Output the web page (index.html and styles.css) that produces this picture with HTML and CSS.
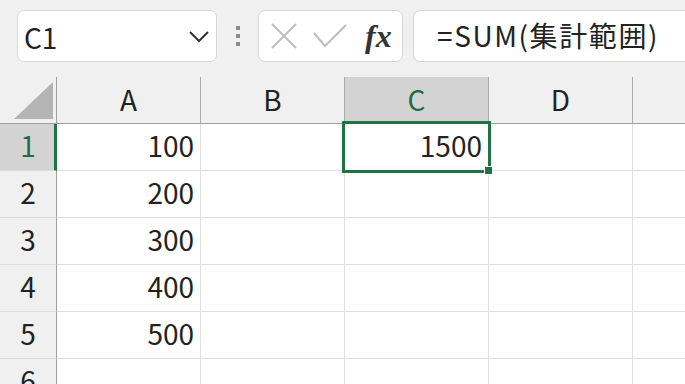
FILE: index.html
```html
<!DOCTYPE html>
<html lang="ja">
<head>
    <meta charset="UTF-8">
    <title>Book1</title>
    <link rel="stylesheet" href="styles.css">
</head>
<body>
    <div class="toolbar">
        <div class="namebox">
            <span class="name">C1</span>
            <svg class="chevron" width="20" height="12" viewBox="0 0 20 12">
                <polyline points="1,1 10,10 19,1" fill="none" stroke="#333" stroke-width="2"/>
            </svg>
        </div>
        <div class="dots"><i></i><i></i><i></i></div>
        <div class="fbox">
            <svg width="26" height="26" viewBox="0 0 26 26">
                <path d="M1 1 L25 25 M25 1 L1 25" stroke="#bdbdbd" stroke-width="2" fill="none"/>
            </svg>
            <svg width="34" height="24" viewBox="0 0 34 24">
                <polyline points="1,9 12,22 33,1" stroke="#bdbdbd" stroke-width="2" fill="none"/>
            </svg>
            <span class="fx">fx</span>
        </div>
        <div class="formula">=SUM(集計範囲)</div>
    </div>

    <div class="sheet">
        <div class="corner"><span></span></div>
        <div class="colhead">A</div>
        <div class="colhead">B</div>
        <div class="colhead active">C</div>
        <div class="colhead">D</div>
        <div class="colhead"></div>

        <div class="rowhead active">1</div>
        <div class="cell">100</div>
        <div class="cell"></div>
        <div class="cell">1500</div>
        <div class="cell"></div>
        <div class="cell"></div>

        <div class="rowhead">2</div>
        <div class="cell">200</div>
        <div class="cell"></div>
        <div class="cell"></div>
        <div class="cell"></div>
        <div class="cell"></div>

        <div class="rowhead">3</div>
        <div class="cell">300</div>
        <div class="cell"></div>
        <div class="cell"></div>
        <div class="cell"></div>
        <div class="cell"></div>

        <div class="rowhead">4</div>
        <div class="cell">400</div>
        <div class="cell"></div>
        <div class="cell"></div>
        <div class="cell"></div>
        <div class="cell"></div>

        <div class="rowhead">5</div>
        <div class="cell">500</div>
        <div class="cell"></div>
        <div class="cell"></div>
        <div class="cell"></div>
        <div class="cell"></div>

        <div class="rowhead">6</div>
        <div class="cell"></div>
        <div class="cell"></div>
        <div class="cell"></div>
        <div class="cell"></div>
        <div class="cell"></div>

        <div class="selection"><span class="handle"></span></div>
    </div>
</body>
</html>
```

FILE: styles.css
```css
html,body{
    margin: 0;
    padding: 0;
    height: 100%;
    overflow: hidden;
    background-color: #f0f0f0;
    font-family: "Noto Sans CJK JP", "Noto Sans", sans-serif;
    color: #222;
}
.toolbar{
    display: flex;
    align-items: center;
    padding: 10px 0 0 17px;
    height: 52px;
}
.toolbar>div{
    flex: none;
}
.namebox{
    box-sizing: border-box;
    width: 200px;
    height: 52px;
    background-color: #fff;
    border: 1px solid #d6d6d6;
    border-radius: 7px;
    display: flex;
    align-items: center;
    justify-content: space-between;
    padding: 0 7px 0 6px;
}
.name{
    font-size: 28px;
    line-height: 1;
    margin-top: 2px;
}
.chevron{
    margin-top: 2px;
}
.dots{
    width: 41px;
    display: flex;
    flex-direction: column;
    align-items: center;
    gap: 4px;
}
.dots i{
    display: block;
    width: 4px;
    height: 4px;
    background-color: #8c8c8c;
}
.fbox{
    box-sizing: border-box;
    width: 145px;
    height: 52px;
    background-color: #fff;
    border: 1px solid #d6d6d6;
    border-radius: 7px;
    display: flex;
    align-items: center;
    padding: 0 0 0 12px;
    gap: 18px;
}
.fbox svg:nth-child(2){
    margin-left: -2px;
}
.fx{
    font-family: "Liberation Serif", serif;
    font-style: italic;
    font-weight: bold;
    font-size: 32px;
    color: #333;
    line-height: 1;
}
.formula{
    box-sizing: border-box;
    width: 320px;
    height: 52px;
    margin-left: 10px;
    background-color: #fff;
    border: 1px solid #d6d6d6;
    border-right: none;
    border-radius: 7px 0 0 7px;
    padding-left: 23px;
    font-size: 28px;
    letter-spacing: 1.6px;
    line-height: 48px;
}
.sheet{
    position: relative;
    margin-top: 15px;
    display: grid;
    grid-template-columns: 57px repeat(5, 144px);
    grid-template-rows: 47px repeat(6, 47px);
    background-color: #fff;
}
.corner,.colhead,.rowhead,.cell{
    box-sizing: border-box;
    font-size: 28px;
}
.corner{
    background-color: #f0f0f0;
    border-right: 1px solid #a0a0a0;
    border-bottom: 1px solid #a0a0a0;
    position: relative;
}
.corner span{
    position: absolute;
    left: 14px;
    top: 5px;
    width: 0;
    height: 0;
    border-left: 39px solid transparent;
    border-bottom: 37px solid #b4b4b4;
}
.colhead{
    background-color: #f0f0f0;
    border-right: 1px solid #ababab;
    border-bottom: 1px solid #9d9d9d;
    text-align: center;
    line-height: 44px;
}
.colhead.active{
    background-color: #d3d3d3;
    color: #1d6b45;
}
.rowhead{
    background-color: #f0f0f0;
    border-right: 1px solid #a0a0a0;
    border-bottom: 1px solid #dadada;
    text-align: center;
    line-height: 42px;
}
.rowhead.active{
    background-color: #d3d3d3;
    color: #1d6b45;
    border-right: 3px solid #217346;
    padding-left: 2px;
}
.cell{
    border-right: 1px solid #dedede;
    border-bottom: 1px solid #dedede;
    text-align: right;
    padding-right: 6px;
    line-height: 42px;
}
.selection{
    position: absolute;
    left: 342px;
    top: 44px;
    width: 149px;
    height: 52px;
    box-sizing: border-box;
    border: 3px solid #217346;
}
.handle{
    position: absolute;
    right: -5px;
    bottom: -5px;
    width: 7px;
    height: 7px;
    background-color: #217346;
    border: 1px solid #fff;
}
```
